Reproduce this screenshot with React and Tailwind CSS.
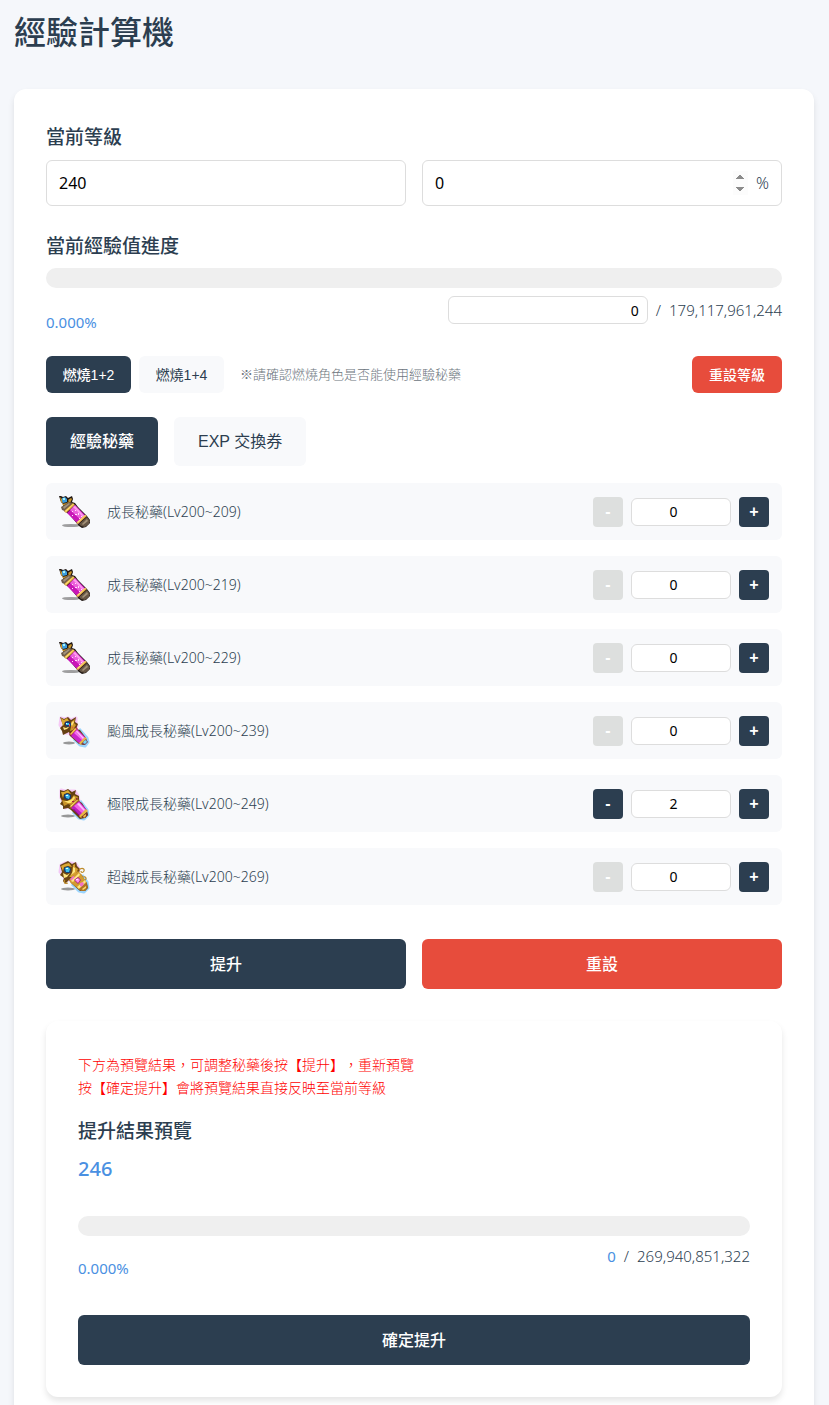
import React from "react";
import { useState } from "react";

const potions = [
  { id: "g209", name: "成長秘藥(Lv200~209)", icon: "growth", count: 0 },
  { id: "g219", name: "成長秘藥(Lv200~219)", icon: "growth", count: 0 },
  { id: "g229", name: "成長秘藥(Lv200~229)", icon: "growth", count: 0 },
  { id: "g239", name: "颱風成長秘藥(Lv200~239)", icon: "typhoon", count: 0 },
  { id: "g249", name: "極限成長秘藥(Lv200~249)", icon: "extreme", count: 2 },
  { id: "g269", name: "超越成長秘藥(Lv200~269)", icon: "transcend", count: 0 },
];

function GrowthIcon() {
  return (
    <svg viewBox="0 0 32 32" className="h-8 w-8 shrink-0 overflow-visible" aria-hidden="true">
      <ellipse cx="12" cy="29.5" rx="9" ry="1.6" fill="#777" opacity="0.7" />
      <path d="M0 0h2l2 1 3-1 2 2 4-2 1 3-1 3 3 1 3 4 9 9 3 4 0 3-4 4-4 1-3-2-10-12-5-3-1-4 0-3-2-2z" fill="#1f1612" />
      <path d="M1 1l2 2 1 4-2-1zM9 4l3-2 1 1-2 4zM3 8l5-1 2-2 1 2-6 3z" fill="#c9962a" />
      <path d="M3 2l3-1 2 2v3l-4 1-1-2z" fill="#3b9ede" />
      <path d="M4 2h2v2H4z" fill="#a9f3f3" />
      <path d="M2 11l8-5 4 1-8 8-3-1z" fill="#6d5b4a" />
      <path d="M4 11l6-4 1 1-6 5z" fill="#a3927b" />
      <path d="M5 15l9-8 2 2-9 8z" fill="#d7a138" />
      <path d="M6 15l8-7 1 0-8 8z" fill="#ffdf7a" />
      <path d="M8 17l8-8 11 11-8 8z" fill="#c816b7" />
      <path d="M11 14l5-5 10 11-4 4z" fill="#eb5edb" />
      <path d="M14 11l2-1 9 10-1 1z" fill="#ff9cf0" />
      <path d="M13 15h1v1h-1zM16 14h1v1h-1zM16 18h2v1h-2zM19 17h1v2h-1zM20 22h1v1h-1zM22 20h1v1h-1zM13 19h1v1h-1z" fill="#ffe0fb" />
      <path d="M17 27l9-8 2 1-9 8z" fill="#dea83d" />
      <path d="M18 26l8-7 1 0-8 8z" fill="#ffe07c" />
      <path d="M20 28l8-7 3 4-1 3-4 3-4-1z" fill="#675746" />
      <path d="M23 28l5-5 1 2-5 4z" fill="#a39178" />
    </svg>
  );
}

function TyphoonIcon() {
  return (
    <svg viewBox="0 0 32 32" className="h-8 w-8 shrink-0 overflow-visible" aria-hidden="true">
      <ellipse cx="10" cy="28" rx="6" ry="1.4" fill="#777" opacity="0.75" />
      <path d="M2 3l4 1 3-1 3 2 5-2 0 5 1 3-2 5-6 2-5 0-1-4-3-4z" fill="none" stroke="#f39af0" strokeWidth="3" opacity="0.5" strokeLinejoin="round" />
      <path d="M20 14l8 9 1 4-3 4-5-1-6-6" fill="none" stroke="#5fbcff" strokeWidth="3" opacity="0.6" strokeLinejoin="round" />
      <path d="M1 2l4 2 4-2 3 3 5-3-1 5 3 2-2 5 4 1 6 8 1 4-3 3-5-1-9-8-1-4-6 3-1-4-2-3 3-3z" fill="#654112" />
      <path d="M2 3l3 2 3-2 2 3-4 1-2 4-1-3z" fill="#d9a931" />
      <path d="M12 7l4-3-1 4 2 2-3 5-3 1 1-4z" fill="#cd992c" />
      <path d="M14 6l1 1-2 4-1-2zM4 12l3 1 4-2-3 3-3 1z" fill="#ffe681" />
      <path d="M6 7l3-1 3 2v3l-4 1-2-2z" fill="#1d3973" />
      <path d="M7 8h3v2H7z" fill="#40c5ee" />
      <path d="M7 8h1v1H7z" fill="#e0ffff" />
      <path d="M10 9h1v2h-1zM13 12h1v1h-1z" fill="#e84a50" />
      <path d="M10 20l7-8 2 2-7 7z" fill="#a11944" />
      <path d="M11 19l5-6 2 1-6 6z" fill="#f0c34c" />
      <path d="M12 21l6-7 9 9-6 6z" fill="#cb24cb" />
      <path d="M15 18l3-3 8 8-2 3z" fill="#f46bec" />
      <path d="M17 16l1 0 7 7-1 1z" fill="#ffc3fc" />
      <path d="M20 28l6-6 2 2-6 6z" fill="#e7b743" />
      <path d="M22 29l5-5 2 3-3 3z" fill="#7b3d52" />
      <path d="M25 26l2-1 1 2-2 2-2-1z" fill="#72d8f6" />
    </svg>
  );
}

function ExtremeIcon() {
  return (
    <svg viewBox="0 0 32 32" className="h-8 w-8 shrink-0 overflow-visible" aria-hidden="true">
      <ellipse cx="9" cy="28" rx="7" ry="1.5" fill="#777" opacity="0.75" />
      <path d="M2 2l4 1 6 0 4 0 3 5 1 5-6 4-8 3-1-5-3-5z" fill="none" stroke="#f39af0" strokeWidth="3" opacity="0.5" strokeLinejoin="round" />
      <path d="M21 13l7 9 1 5-4 4-5-1-6-6" fill="none" stroke="#5fbcff" strokeWidth="3" opacity="0.6" strokeLinejoin="round" />
      <path d="M1 2l4 1 4-2 4 3 4-2-1 4 4 2 0 5 3 2 5 8 1 4-3 3-5 1-9-9-3-2-5 1 0-3-3-2 2-3-2-4z" fill="#654112" />
      <path d="M2 4l3 0 4-2 3 4-3-1-4 1-1 4z" fill="#d9a931" />
      <path d="M3 12l5 1 4-2 3-4 1 1 3 1-2 5-5 3-3-1-4 2-1-3z" fill="#c8932a" />
      <path d="M5 13l4 0 4-2 2-3 1 2-4 5-3 0z" fill="#ffe06d" />
      <path d="M5 7l3-2 4 2v4l-4 1-3-2z" fill="#17366e" />
      <path d="M6 7l3-1 2 2-1 3-3-1z" fill="#3ab9ec" />
      <path d="M7 7h2v1H7z" fill="#e0ffff" />
      <path d="M13 13h2v1h-2zM17 10h1v2h-1z" fill="#9c1f3d" />
      <path d="M10 19l8-8 3 1-9 9z" fill="#a36d1d" />
      <path d="M11 18l7-6 1 0-7 7z" fill="#ffe071" />
      <path d="M12 20l8-7 8 9-6 7z" fill="#bd20bf" />
      <path d="M15 18l5-4 7 8-3 4z" fill="#f062e5" />
      <path d="M18 16l2-1 6 7-1 1z" fill="#ffbff9" />
      <path d="M14 21l1 0 6 7-1 0z" fill="#7d0d80" />
      <path d="M20 28l7-7 2 2-7 7z" fill="#e7b743" />
      <path d="M22 29l6-5 1 3-3 3z" fill="#75352d" />
      <path d="M24 28l3-2 0 2-2 2z" fill="#efbd45" />
    </svg>
  );
}

function TranscendIcon() {
  return (
    <svg viewBox="0 0 32 32" className="h-8 w-8 shrink-0 overflow-visible" aria-hidden="true">
      <ellipse cx="9" cy="28" rx="7" ry="1.5" fill="#777" opacity="0.75" />
      <path d="M2 4l4-2 6 0 5 1 3 5-2 6-7 5-5 0-1-4-4-4z" fill="none" stroke="#ee98f2" strokeWidth="3" opacity="0.5" strokeLinejoin="round" />
      <path d="M23 14l5 7 1 6-4 4-5-1-7-7" fill="none" stroke="#5fbcff" strokeWidth="3" opacity="0.6" strokeLinejoin="round" />
      <path d="M1 4l4-2 4-2 4 3 4-2 1 4 3 3-1 4 3 2 2 4 3 4 1 5-3 3-5 0-9-8-2-3-4 4-2-3 1-3-4-3 2-3z" fill="#6d4614" />
      <path d="M20 9c3-3 6-1 5 1s-3 2-3 0M24 16c3-1 4 2 2 3M6 19c-2 2 0 4 3 3" fill="none" stroke="#bd8b29" strokeWidth="1.2" />
      <path d="M2 5l4-2 4-1 3 4-4-1-4 1-1 4z" fill="#dda934" />
      <path d="M14 4l2-1 0 3 3 2-2 5-4 3-3 0 3-4z" fill="#d7a133" />
      <path d="M14 6l2 1 0 4-4 3 2-4zM4 12l4 2 3-2-3 4-3 1z" fill="#ffe680" />
      <path d="M5 7l4-2 3 3-1 4-4 0-2-2z" fill="#174174" />
      <path d="M6 7l3-1 2 2-1 3-3 0z" fill="#3cbfe9" />
      <path d="M7 7h2v1H7z" fill="#e0ffff" />
      <path d="M10 19l9-9 3 3 6 9-7 7-9-7z" fill="#d29b2f" />
      <path d="M11 18l3-3 2 1-3 4z" fill="#ee73c4" />
      <path d="M12 20l8-8 1 2-7 7z" fill="#ffe783" />
      <path d="M15 19l4-3 3 3-3 4z" fill="#a52180" />
      <path d="M16 19l3-2 2 2-2 3z" fill="#ff8fe7" />
      <path d="M17 18h2v1h-2z" fill="#ffe2fb" />
      <path d="M18 26l8-7 1 2-7 7z" fill="#ffe47d" />
      <path d="M21 22l3-1 1 2-2 3-2-1z" fill="#ef73c3" />
      <path d="M20 28l7-6 2 4-3 4-4 0z" fill="#ad7424" />
      <path d="M23 28l4-3 0 2-3 2z" fill="#ffd964" />
    </svg>
  );
}

const icons = {
  growth: GrowthIcon,
  typhoon: TyphoonIcon,
  extreme: ExtremeIcon,
  transcend: TranscendIcon,
};

function PotionRow({ potion, count, onChange }) {
  const Icon = icons[potion.icon];
  const stepClass =
    "h-[30px] w-[30px] rounded bg-[#2c3e50] font-['Liberation_Sans',sans-serif] text-base font-bold text-white disabled:bg-[#dddfde]";

  return (
    <li className="flex h-[57px] items-center gap-4 rounded-md bg-[#f8f9fb] px-[13px]">
      <Icon />
      <label htmlFor={potion.id} className="flex-1 text-sm font-light">
        {potion.name}
      </label>
      <div className="flex items-center gap-2">
        <button type="button" className={stepClass} disabled={count === 0} onClick={() => onChange(count - 1)}>
          -
        </button>
        <input
          id={potion.id}
          type="number"
          min="0"
          value={count}
          onChange={(e) => onChange(Math.max(0, Number(e.target.value)))}
          className="h-7 w-[100px] rounded-md border border-[#ddd] bg-white px-2 text-center text-sm text-black"
        />
        <button type="button" className={stepClass} onClick={() => onChange(count + 1)}>
          +
        </button>
      </div>
    </li>
  );
}

function App() {
  const [level, setLevel] = useState("240");
  const [percent, setPercent] = useState("0");
  const [exp, setExp] = useState("0");
  const [burning, setBurning] = useState("1+2");
  const [tab, setTab] = useState("potion");
  const [counts, setCounts] = useState(potions.map((p) => p.count));

  const changeCount = (index, value) => {
    setCounts(counts.map((c, i) => (i === index ? value : c)));
  };

  const resetLevel = () => {
    setLevel("200");
    setPercent("0");
    setExp("0");
  };

  const active = "bg-[#2c3e50] text-white";
  const inactive = "bg-[#f8f9fb] text-[#2c3e50]";

  return (
    <div className="min-h-screen bg-[#f5f7fb] pr-[15px] pl-[14px] font-['Noto_Sans','Noto_Sans_CJK_TC',sans-serif] text-[#2c3e50]">
      <h1 className="pt-2 pb-[33px] text-[32px] leading-[48px] font-medium">經驗計算機</h1>

      <main className="rounded-xl bg-white p-8 shadow-[0_4px_6px_rgba(0,0,0,0.1)]">
        <label htmlFor="level" className="block text-[19px] leading-8 font-medium">
          當前等級
        </label>
        <div className="mt-[7px] grid grid-cols-2 gap-4">
          <input
            id="level"
            type="text"
            value={level}
            onChange={(e) => setLevel(e.target.value)}
            className="h-[46px] min-w-0 rounded-md border border-[#ddd] px-3 text-base text-black"
          />
          <div className="flex h-[46px] min-w-0 items-center gap-2 rounded-md border border-[#ddd] px-3">
            <input
              type="number"
              aria-label="%"
              value={percent}
              onChange={(e) => setPercent(e.target.value)}
              className="min-w-0 flex-1 text-base text-black outline-none [&::-webkit-inner-spin-button]:opacity-100"
            />
            <span className="text-base font-light">%</span>
          </div>
        </div>

        <label htmlFor="exp" className="mt-6 block text-[19px] leading-8 font-medium">
          當前經驗值進度
        </label>
        <div className="mt-[6px] h-5 rounded-full bg-[#efefef]"></div>
        <div className="mt-2 flex items-start justify-between">
          <span className="mt-4 text-[15px] leading-5 text-[#4a90e2]">0.000%</span>
          <div className="flex items-center gap-2 text-[15px] font-light">
            <input
              id="exp"
              type="text"
              value={exp}
              onChange={(e) => setExp(e.target.value)}
              className="h-7 w-[200px] rounded-md border border-[#ddd] px-2 text-right text-sm font-normal text-black"
            />
            <span>/</span>
            <span>179,117,961,244</span>
          </div>
        </div>

        <div className="mt-6 flex items-center gap-2 font-['Liberation_Sans','Noto_Sans_CJK_TC',sans-serif] text-sm">
          <button
            type="button"
            onClick={() => setBurning("1+2")}
            className={`h-[37px] w-[85px] rounded-md font-medium ${burning === "1+2" ? active : inactive}`}
          >
            燃燒1+2
          </button>
          <button
            type="button"
            onClick={() => setBurning("1+4")}
            className={`h-[37px] w-[85px] rounded-md ${burning === "1+4" ? active : inactive}`}
          >
            燃燒1+4
          </button>
          <span className="ml-2 flex-1 font-['Noto_Sans_CJK_TC',sans-serif] text-[13px] font-light text-[#6c757d]">
            ※請確認燃燒角色是否能使用經驗秘藥
          </span>
          <button
            type="button"
            onClick={resetLevel}
            className="h-[37px] w-[90px] rounded-md bg-[#e74c3c] font-medium text-white"
          >
            重設等級
          </button>
        </div>

        <div className="mt-6 flex gap-4 font-['Liberation_Sans','Noto_Sans_CJK_TC',sans-serif] text-base">
          <button
            type="button"
            onClick={() => setTab("potion")}
            className={`h-[49px] rounded-md px-6 font-medium ${tab === "potion" ? active : inactive}`}
          >
            經驗秘藥
          </button>
          <button
            type="button"
            onClick={() => setTab("coupon")}
            className={`h-[49px] rounded-md px-6 ${tab === "coupon" ? active : inactive}`}
          >
            EXP 交換券
          </button>
        </div>

        <ul className="mt-[17px] flex flex-col gap-4">
          {potions.map((potion, index) => (
            <PotionRow
              key={potion.id}
              potion={potion}
              count={counts[index]}
              onChange={(value) => changeCount(index, value)}
            />
          ))}
        </ul>

        <div className="mt-[34px] grid grid-cols-2 gap-4">
          <button type="button" className="h-[50px] rounded-md bg-[#2c3e50] text-base font-medium text-white">
            提升
          </button>
          <button
            type="button"
            onClick={() => setCounts(potions.map(() => 0))}
            className="h-[50px] rounded-md bg-[#e74c3c] text-base font-medium text-white"
          >
            重設
          </button>
        </div>

        <section className="mt-8 rounded-xl bg-white p-8 shadow-[0_4px_6px_rgba(0,0,0,0.1)]">
          <p className="text-sm leading-[23px] font-light text-[#ff0000] [text-spacing-trim:space-all]">
            下方為預覽結果，可調整秘藥後按【提升】，重新預覽
            <br />
            按【確定提升】會將預覽結果直接反映至當前等級
          </p>
          <h2 className="mt-4 text-[19px] leading-8 font-medium">提升結果預覽</h2>
          <p className="mt-1 text-[20px] leading-9 font-medium text-[#4a90e2]">246</p>
          <div className="mt-[29px] h-5 rounded-full bg-[#efefef]"></div>
          <div className="mt-2 flex items-start justify-between">
            <span className="mt-[14px] text-[15px] leading-5 text-[#4a90e2]">0.000%</span>
            <div className="flex gap-2 text-[15px] leading-6 font-light">
              <span className="font-normal text-[#4a90e2]">0</span>
              <span>/</span>
              <span>269,940,851,322</span>
            </div>
          </div>
          <button
            type="button"
            className="mt-[37px] h-[50px] w-full rounded-md bg-[#2c3e50] text-base font-medium text-white"
          >
            確定提升
          </button>
        </section>
      </main>
    </div>
  );
}

export default App;
